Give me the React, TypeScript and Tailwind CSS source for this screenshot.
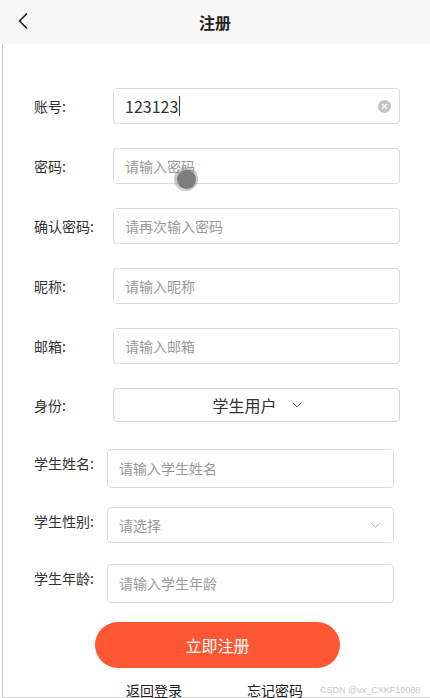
import { ChevronDown, ChevronLeft } from "lucide-react";

const font = { fontFamily: '"Noto Sans CJK SC", "Noto Sans", sans-serif' };

function Row({ label, children, top }: { label: string; children: React.ReactNode; top: string }) {
  return (
    <div className={`flex items-center shrink-0 ${top}`}>
      <div className="w-[110px] pl-[31px] text-[14px] text-[#333] shrink-0 whitespace-nowrap">{label}</div>
      {children}
    </div>
  );
}

function Field({ placeholder }: { placeholder: string }) {
  return (
    <div className="h-[36px] w-[287px] rounded-[4px] border border-[#dcdcdc] flex items-center px-[11px] text-[14px] text-[#999]">
      {placeholder}
    </div>
  );
}

// Student-only block: inputs sit a bit further left and labels hug the top.
function StudentRow({
  label,
  top,
  h,
  children,
}: {
  label: string;
  top: string;
  h: string;
  children: React.ReactNode;
}) {
  return (
    <div className={`flex items-start shrink-0 ${top}`}>
      <div className="w-[104px] pl-[31px] pt-[4px] text-[14px] text-[#333] shrink-0 whitespace-nowrap">{label}</div>
      <div
        className={`${h} w-[287px] rounded-[4px] border border-[#dcdcdc] flex items-center justify-between pl-[11px] pr-[10px] text-[14px] text-[#999]`}
      >
        {children}
      </div>
    </div>
  );
}

export default function App() {
  return (
    <div className="relative w-[430px] h-[698px] overflow-hidden bg-white" style={font}>
      <div className="relative h-[44px] bg-[#f7f7f7] flex items-center justify-center">
        <ChevronLeft className="absolute left-[9px] top-[7px] text-[#222]" size={28} strokeWidth={1.5} />
        <span className="text-[16px] font-bold text-[#222]">注册</span>
      </div>

      <div className="ml-[2px] h-[654px] border-l border-b border-[#cfcfcf] flex flex-col">
        <Row label="账号:" top="mt-[44px]">
          <div className="h-[36px] w-[287px] rounded-[4px] border border-[#dcdcdc] flex items-center justify-between pl-[11px] pr-[8px]">
            <span className="text-[16px] text-[#333] flex items-center">
              123123<span className="ml-[1px] inline-block w-[1px] h-[20px] bg-[#333]" />
            </span>
            <span className="w-[13px] h-[13px] rounded-full bg-[#c4c4c4] flex items-center justify-center">
              <svg width="7" height="7" viewBox="0 0 7 7">
                <path d="M1 1L6 6M6 1L1 6" stroke="#fff" strokeWidth="1.3" />
              </svg>
            </span>
          </div>
        </Row>
        <Row label="密码:" top="mt-[24px]">
          <Field placeholder="请输入密码" />
        </Row>
        <Row label="确认密码:" top="mt-[24px]">
          <Field placeholder="请再次输入密码" />
        </Row>
        <Row label="昵称:" top="mt-[24px]">
          <Field placeholder="请输入昵称" />
        </Row>
        <Row label="邮箱:" top="mt-[24px]">
          <Field placeholder="请输入邮箱" />
        </Row>
        <Row label="身份:" top="mt-[24px]">
          <div className="h-[34px] w-[287px] rounded-[4px] border border-[#d6d6d6] flex items-center justify-center gap-[12px] text-[16px] text-[#333] pl-[4px]">
            学生用户
            <ChevronDown size={16} strokeWidth={1.4} className="text-[#555]" />
          </div>
        </Row>

        <StudentRow label="学生姓名:" top="mt-[27px]" h="h-[39px]">
          请输入学生姓名
        </StudentRow>
        <StudentRow label="学生性别:" top="mt-[19px]" h="h-[36px]">
          <span>请选择</span>
          <ChevronDown size={15} strokeWidth={1.2} className="text-[#999]" />
        </StudentRow>
        <StudentRow label="学生年龄:" top="mt-[21px]" h="h-[39px]">
          请输入学生年龄
        </StudentRow>

        <div className="shrink-0 mt-[19px] ml-[92px] w-[245px] h-[46px] rounded-full bg-[#ff5733] flex items-center justify-center text-white text-[16px]">
          立即注册
        </div>

        <div className="shrink-0 mt-[12px] flex items-center text-[14px] text-[#222] whitespace-nowrap">
          <span className="ml-[123px]">返回登录</span>
          <span className="ml-[65px]">忘记密码</span>
          <span
            className="ml-[17px] text-[9px] text-[#c8c8c8]"
            style={{ fontFamily: '"Liberation Sans", sans-serif' }}
          >
            CSDN @vx_CXKF10088
          </span>
        </div>
      </div>

      {/* touch cursor overlay */}
      <div className="absolute left-[174px] top-[167px] w-[24px] h-[24px] rounded-full bg-[#7a7a7a]/40 flex items-center justify-center">
        <div className="w-[19px] h-[19px] rounded-full bg-[#7d7d7d]" />
      </div>
    </div>
  );
}
